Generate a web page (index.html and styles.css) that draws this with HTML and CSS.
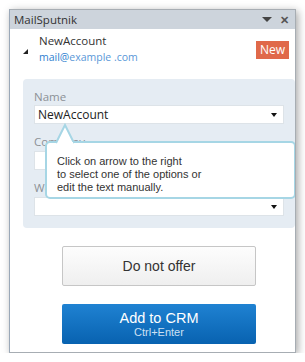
FILE: index.html
```html
<!DOCTYPE html>
<html lang="en">
<head>
    <meta charset="UTF-8">
    <title>MailSputnik</title>
    <link rel="stylesheet" href="styles.css">
</head>
<body>
    <div class="pane">
        <div class="pane-title">
            <span class="pane-name">MailSputnik</span>
            <span class="pane-menu"></span>
            <span class="pane-close">&#x2715;</span>
        </div>

        <div class="contact">
            <span class="expander"></span>
            <div class="contact-info">
                <div class="contact-name">NewAccount</div>
                <div class="contact-mail">mail@<span class="domain">example .com</span></div>
            </div>
            <span class="badge">New</span>
        </div>

        <div class="form">
            <label class="field-label">Name</label>
            <div class="combo">NewAccount<span class="combo-arrow"></span></div>
            <label class="field-label">Company</label>
            <div class="combo"></div>
            <label class="field-label">Website</label>
            <div class="combo"><span class="combo-arrow"></span></div>

            <div class="hint">
                <svg class="hint-tail" width="22" height="21" viewBox="0 0 22 21">
                    <path d="M1 20 L10 2 L19 20" fill="#fff" stroke="#a6d6e5" stroke-width="2"/>
                    <rect x="3" y="19" width="15" height="2" fill="#fff"/>
                </svg>
                Click on arrow to the right<br>
                to select one of the options or<br>
                edit the text manually.
            </div>
        </div>

        <div class="actions">
            <button class="btn btn-plain">Do not offer</button>
            <button class="btn btn-primary">Add to CRM<span class="btn-hotkey">Ctrl+Enter</span></button>
        </div>

        <div class="more">New call</div>
    </div>
</body>
</html>
```

FILE: styles.css
```css
body {
    margin: 0;
    background: #fff;
    font-family: 'Open Sans', sans-serif;
    color: #333;
}

/* Outer pane with shadow */
.pane {
    position: relative;
    margin: 9px 0 0 9px;
    width: 285px;
    height: 342px;
    border: 1px solid #a7adb3;
    border-left-color: #9aa8b8;
    box-shadow: 2px 2px 8px rgba(0, 0, 0, 0.35);
    overflow: hidden;
    background: #fff;
}

/* Title bar */
.pane-title {
    display: flex;
    align-items: center;
    height: 19px;
    padding: 0 6px 0 4px;
    background: #cdd4dc;
    font-size: 11.5px;
    color: #333;
}

.pane-name {
    flex: 1;
}

.pane-menu {
    width: 0;
    height: 0;
    border-left: 5px solid transparent;
    border-right: 5px solid transparent;
    border-top: 5px solid #444;
    margin-right: 8px;
}

.pane-close {
    font-size: 11px;
    font-weight: bold;
    color: #555;
}

/* Contact header */
.contact {
    display: flex;
    align-items: flex-start;
    height: 50px;
    padding: 3px 6px 0 13px;
    box-sizing: border-box;
}

.expander {
    width: 0;
    height: 0;
    margin-top: 17px;
    border-left: 5px solid transparent;
    border-bottom: 5px solid #222;
}

.contact-info {
    flex: 1;
    padding-left: 11px;
}

.contact-name {
    font-size: 11.5px;
    line-height: 17px;
    color: #333;
}

.contact-mail {
    font-size: 10.5px;
    line-height: 17px;
    color: #2f7fd0;
}

.domain {
    color: #5a98d8;
}

.badge {
    margin-top: 9px;
    background: #e0694a;
    color: #fff;
    font-size: 12px;
    line-height: 18px;
    padding: 0 4px;
}

/* Form */
.form {
    position: relative;
    margin: 0 0 0 13px;
    padding: 10px 11px 12px 11px;
    background: #e5ecf3;
    border-radius: 4px;
}

.field-label {
    display: block;
    font-size: 11.5px;
    line-height: 16px;
    color: #8c9196;
    margin-top: 10px;
    margin-bottom: 1px;
}

.field-label:first-child {
    margin-top: 0;
    margin-bottom: 0;
}

.combo {
    position: relative;
    height: 17px;
    background: #fff;
    border: 1px solid #dde3e8;
    padding-left: 3px;
    font-size: 12px;
    line-height: 17px;
    color: #222;
}

.combo-arrow {
    position: absolute;
    right: 6px;
    top: 7px;
    width: 0;
    height: 0;
    border-left: 3px solid transparent;
    border-right: 3px solid transparent;
    border-top: 4px solid #111;
}

/* Tooltip */
.hint {
    position: absolute;
    left: 22px;
    top: 62px;
    width: 251px;
    height: 58px;
    padding: 12px 0 0 10px;
    box-sizing: border-box;
    background: #fff;
    border: 2px solid #a6d6e5;
    border-radius: 5px;
    font-family: 'Liberation Sans', Arial, sans-serif;
    font-size: 11px;
    line-height: 13px;
    color: #333;
}

.hint-tail {
    position: absolute;
    left: 8px;
    top: -20px;
}

/* Buttons */
.actions {
    display: flex;
    flex-direction: column;
    gap: 18px;
    margin: 18px 0 0 52px;
    width: 194px;
}

.btn {
    height: 40px;
    border-radius: 2px;
    font-family: 'Liberation Sans', Arial, sans-serif;
    font-size: 14px;
    cursor: pointer;
}

.btn-plain {
    background: linear-gradient(#fdfdfd, #efefef);
    border: 1px solid #c6c6c6;
    color: #333;
}

.btn-primary {
    display: flex;
    flex-direction: column;
    align-items: center;
    justify-content: center;
    background: linear-gradient(#1f82d2, #0862b0);
    border: none;
    color: #fff;
    font-size: 14.5px;
    line-height: 16px;
}

.btn-hotkey {
    font-size: 11px;
    line-height: 13px;
    color: #cde0f3;
}

.more {
    margin: 5px 0 0 30px;
    font-size: 13px;
    color: #999;
}
```
